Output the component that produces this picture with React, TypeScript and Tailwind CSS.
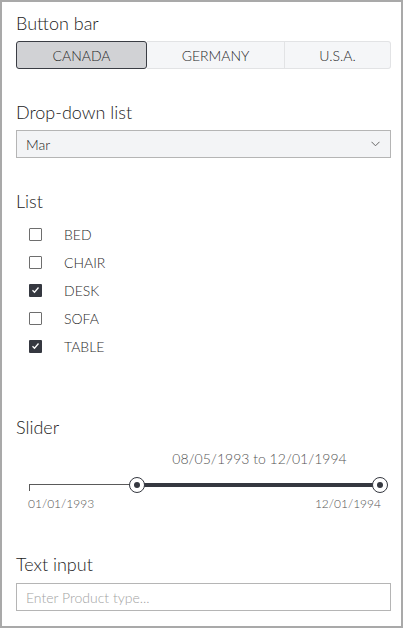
export default function App() {
  const items: [string, boolean][] = [
    ["BED", false],
    ["CHAIR", false],
    ["DESK", true],
    ["SOFA", false],
    ["TABLE", true],
  ];
  return (
    <div className="w-[403px] h-[628px] border-2 border-[#a9a9a9] bg-white pl-[14px] pr-[10px] pt-[9px] font-['Lato','Open_Sans',sans-serif] text-[#222]">
      <div className="text-[18px] leading-6 font-light">Button bar</div>
      <div className="mt-[6px] flex h-7 text-[14px] font-light text-[#2a2a2a]">
        <div className="w-[131px] flex items-center justify-center rounded-[3px] border border-[#3a3d44] bg-[#d1d2d5]">CANADA</div>
        <div className="w-[138px] flex items-center justify-center border-y border-r border-[#e2e3e5] bg-[#f5f6f8]">GERMANY</div>
        <div className="flex-1 flex items-center justify-center border-y border-r border-[#e2e3e5] rounded-r-[3px] bg-[#f5f6f8]">U.S.A.</div>
      </div>

      <div className="mt-[31px] text-[18px] leading-6 font-light">Drop-down list</div>
      <div className="mt-[6px] flex h-7 items-center justify-between border border-[#b5b5b5] bg-[#f3f4f6] pl-[9px] pr-[10px] text-[14px] font-light text-[#222]">
        <span>Mar</span>
        <svg width="9" height="6" viewBox="0 0 9 6" fill="none">
          <path d="M0.5 0.8 L4.5 4.8 L8.5 0.8" stroke="#666" strokeWidth="1" />
        </svg>
      </div>

      <div className="mt-[31px] text-[18px] leading-6 font-light">List</div>
      <div className="mt-[7px] flex flex-col">
        {items.map(([label, checked]) => (
          <div key={label} className="flex h-7 items-center">
            <div className="ml-[13px]">
              {checked ? (
                <div className="flex h-[13px] w-[13px] items-center justify-center rounded-[1px] bg-[#353840]">
                  <svg width="9" height="8" viewBox="0 0 9 8" fill="none">
                    <path d="M1.5 4.2 L3.5 6.2 L7.5 1.5" stroke="white" strokeWidth="1.3" />
                  </svg>
                </div>
              ) : (
                <div className="h-[13px] w-[13px] rounded-[1px] border border-[#6e6e6e] bg-white" />
              )}
            </div>
            <span className="ml-[22px] text-[14px] font-light text-[#2a2a2a]">{label}</span>
          </div>
        ))}
      </div>

      <div className="mt-[55px] text-[18px] leading-6 font-light">Slider</div>
      <div className="mt-[12px] flex h-4 items-center justify-center pl-[112px] text-[14px] font-light leading-4 text-[#555]">
        08/05/1993 to 12/01/1994
      </div>
      <div className="relative ml-[13px] mr-[11px] mt-[8px] h-5">
        <div className="absolute left-0 top-[9px] h-px w-[108px] bg-[#5a5a5a]" />
        <div className="absolute left-0 top-[10px] h-[6px] w-px bg-[#5a5a5a]" />
        <div className="absolute left-[108px] right-0 top-[8px] h-1 bg-[#353840]" />
        <div className="absolute left-[100px] top-[2px] flex h-4 w-4 items-center justify-center rounded-full border border-[#353840] bg-white">
          <div className="h-[6px] w-[6px] rounded-full bg-[#353840]" />
        </div>
        <div className="absolute right-[-8px] top-[2px] flex h-4 w-4 items-center justify-center rounded-full border border-[#353840] bg-white">
          <div className="h-[6px] w-[6px] rounded-full bg-[#353840]" />
        </div>
      </div>
      <div className="ml-[12px] mr-[10px] mt-[1px] flex justify-between text-[12px] font-light leading-4 text-[#555]">
        <span>01/01/1993</span>
        <span>12/01/1994</span>
      </div>

      <div className="mt-[40px] text-[18px] leading-6 font-light">Text input</div>
      <div className="mt-[7px] flex h-7 items-center border border-[#b5b5b5] bg-white pl-[9px] text-[14px] font-light text-[#a3a3a3]">
        Enter Product type...
      </div>
    </div>
  );
}
